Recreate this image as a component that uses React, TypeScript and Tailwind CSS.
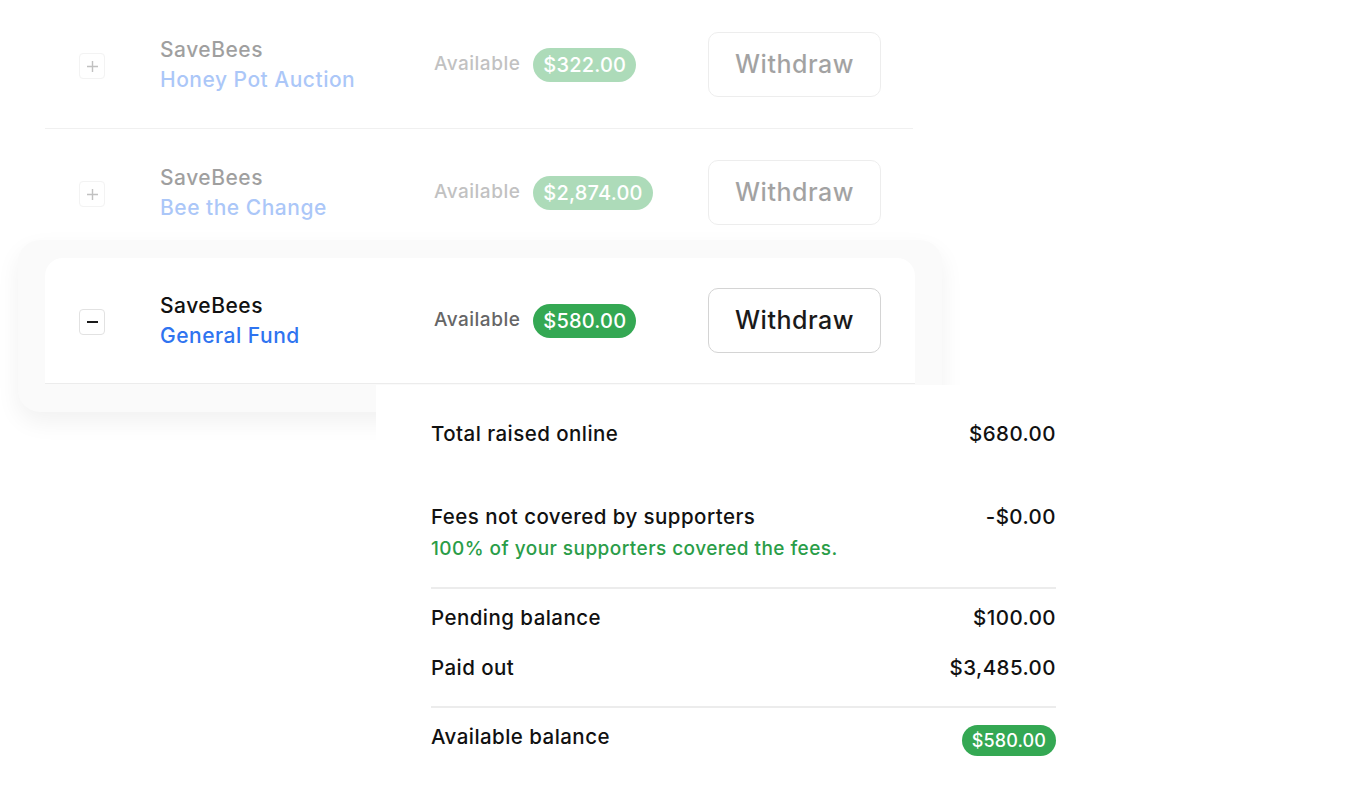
import React from 'react';

interface Fund {
  id: string;
  org: string;
  name: string;
  available: string;
}

const funds: Fund[] = [
  { id: '1', org: 'SaveBees', name: 'Honey Pot Auction', available: '$322.00' },
  { id: '2', org: 'SaveBees', name: 'Bee the Change', available: '$2,874.00' },
];

const Toggle: React.FC<{ open?: boolean }> = ({ open }) => (
  <div className="flex h-[26px] w-[26px] items-center justify-center rounded-[4px] border border-[#e2e2e2] bg-white">
    {open ? (
      <span className="block h-[2px] w-[11px] bg-[#1a1a1a]" />
    ) : (
      <svg width="13" height="13" viewBox="0 0 13 13" className="text-[#666]">
        <path d="M6.5 1v11M1 6.5h11" stroke="currentColor" strokeWidth="1.4" />
      </svg>
    )}
  </div>
);

const FundRow: React.FC<{ fund: Fund; open?: boolean }> = ({ fund, open }) => (
  <div className="flex items-center font-medium tracking-[0.5px]">
    <div className="ml-[34px] mt-[3px]">
      <Toggle open={open} />
    </div>
    <div className="ml-[55px] w-[274px]">
      <p className="text-[21px] leading-[30px] text-[#111]">{fund.org}</p>
      <p className="text-[21px] leading-[30px] text-[#2f74f0]">{fund.name}</p>
    </div>
    <div className="flex w-[274px] items-center">
      <span className="text-[19px] text-[#666]">Available</span>
      <span className="ml-[13px] rounded-full bg-[#34a853] px-[10px] py-[2px] text-[20px] leading-[30px] tracking-[0.2px] text-white">
        {fund.available}
      </span>
    </div>
    <button
      type="button"
      className="h-[65px] w-[173px] rounded-[10px] border border-[#d4d4d4] bg-white text-[25px] text-[#1a1a1a]"
    >
      Withdraw
    </button>
  </div>
);

const SummaryRow: React.FC<{ label: string; value: string; className?: string }> = ({ label, value, className }) => (
  <div className={`flex justify-between text-[20.5px] leading-[28px] text-[#111] ${className ?? ''}`}>
    <span>{label}</span>
    <span>{value}</span>
  </div>
);

const App: React.FC = () => {
  return (
    <div className="min-h-screen w-full bg-white font-['Inter',sans-serif]">
      {/* Inactive funds */}
      <div className="ml-[45px] w-[868px]">
        <div className="border-b border-[#f0f0f0] pt-[32px] pb-[31px]">
          <div className="opacity-40">
            <FundRow fund={funds[0]} />
          </div>
        </div>
        <div className="pt-[31px] pb-[15px]">
          <div className="opacity-40">
            <FundRow fund={funds[1]} />
          </div>
        </div>
      </div>

      {/* Active fund card */}
      <div className="ml-[18px] w-[924px] rounded-[22px] bg-[#fafafa] px-[27px] pt-[18px] pb-[28px] shadow-[0_10px_24px_rgba(0,0,0,0.06)]">
        <div className="h-[126px] rounded-t-[18px] border-b border-[#ececec] bg-white pt-[30px]">
          <FundRow fund={{ id: '3', org: 'SaveBees', name: 'General Fund', available: '$580.00' }} open />
        </div>
      </div>

      {/* Breakdown panel */}
      <div className="relative z-10 -mt-[27px] ml-[376px] w-[735px] bg-white pl-[55px] pr-[55px] pt-[35px] pb-[40px] font-medium tracking-[0.45px]">
        <SummaryRow label="Total raised online" value="$680.00" />
        <SummaryRow label="Fees not covered by supporters" value="-$0.00" className="mt-[55px]" />
        <p className="mt-[4px] text-[19px] leading-[28px] tracking-[0.45px] text-[#2a9d48]">100% of your supporters covered the fees.</p>
        <div className="mt-[24px] h-[2px] bg-[#ececec]" />
        <SummaryRow label="Pending balance" value="$100.00" className="mt-[15px]" />
        <SummaryRow label="Paid out" value="$3,485.00" className="mt-[22px]" />
        <div className="mt-[24px] h-[2px] bg-[#ececec]" />
        <div className="mt-[15px] flex items-start justify-between">
          <span className="text-[20.5px] leading-[28px] text-[#111]">Available balance</span>
          <span className="mt-[2px] rounded-full bg-[#34a853] px-[10px] text-[18px] leading-[31px] tracking-[0.1px] text-white">$580.00</span>
        </div>
      </div>
    </div>
  );
};

export default App;
